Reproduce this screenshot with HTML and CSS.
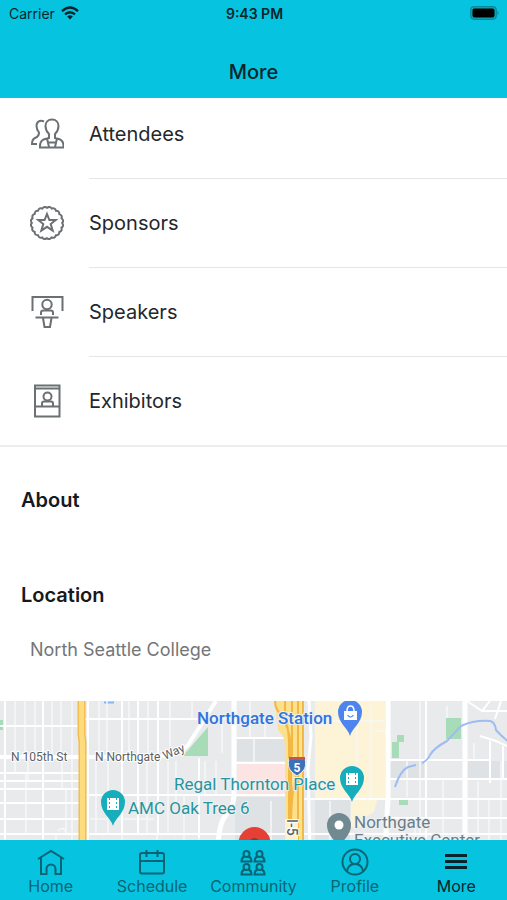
FILE: index.html
```html
<!DOCTYPE html>
<html lang="en">
<head>
<meta charset="utf-8">
<meta name="viewport" content="width=device-width, initial-scale=1">
<title>More</title>
<link rel="stylesheet" href="styles.css">
</head>
<body>
<header class="top">
  <div class="status">
    <span class="carrier">Carrier
      <svg width="18" height="14" viewBox="0 0 18 14" aria-hidden="true"><g fill="none" stroke="#04222a" stroke-width="2.4"><path d="M1 5.2Q9-2 17 5.2"/><path d="M4 8.4Q9 4 14 8.4"/></g><path d="M6.2 10.4Q9 8.2 11.8 10.4L9 13.6Z" fill="#04222a"/></svg>
    </span>
    <span class="time">9:43 PM</span>
    <span class="battery"><svg width="30" height="14" viewBox="0 0 30 14" aria-hidden="true"><rect x=".7" y=".7" width="25.6" height="12.6" rx="3.5" fill="#07a6ba" stroke="#098a9b" stroke-width="1.2"/><rect x="2.5" y="2.5" width="22" height="9" rx="2" fill="#000"/><path d="M27.5 4.6q2.4 2.4 0 4.800z" fill="#098a9b"/></svg></span>
  </div>
  <h1 class="title">More</h1>
</header>

<main class="content">
  <ul class="menu">
    <li class="item"><a class="link" href="#attendees">
      <svg class="icon" viewBox="0 0 34 34" aria-hidden="true"><path d="M14 4.500C10 2.500 6.500 4.500 6.500 9c0 3 1 4.500 2.500 6.500 0 3-1 4.500-4 5.500-2.500 1-3 2.500-3 6h5"/><path d="M22 2.500c-4 0-6.500 2.800-6.500 6.500 0 3.500 1.500 6 3.500 8v4c-3 1-9 .5-9 8v1.500h23.500V29c0-7.500-5.500-7-8.500-8v-4c2-2 3.500-4.500 3.500-8 0-3.700-2.500-6.500-6.500-6.500z"/><path d="M17 21.500l2 8.500M27 21.500l-2 8.500M18.500 25.500h7"/></svg>
      <span class="label">Attendees</span></a></li>
    <li class="item"><a class="link" href="#sponsors">
      <svg class="icon" viewBox="0 0 34 34" aria-hidden="true"><path d="M17.00 1.80 Q20.02 -0.21 21.70 2.54 Q25.19 1.57 25.93 4.70 Q29.55 4.86 29.30 8.07 Q32.68 9.36 31.46 12.30 Q34.30 14.55 32.20 17.00 Q34.21 20.02 31.46 21.70 Q32.43 25.19 29.30 25.93 Q29.14 29.55 25.93 29.30 Q24.64 32.68 21.70 31.46 Q19.45 34.30 17.00 32.20 Q13.98 34.21 12.30 31.46 Q8.81 32.43 8.07 29.30 Q4.45 29.14 4.70 25.93 Q1.32 24.64 2.54 21.70 Q-.30 19.45 1.80 17.00 Q-.21 13.98 2.54 12.30 Q1.57 8.81 4.70 8.07 Q4.86 4.45 8.07 4.70 Q9.36 1.32 12.30 2.54 Q14.55 -.30 17.00 1.80Z"/><path d="M17 8l2.400 6h6.300l-5 4 2 6.700L17 20.800l-5.700 3.900 2-6.700-5-4h6.300z"/></svg>
      <span class="label">Sponsors</span></a></li>
    <li class="item"><a class="link" href="#speakers">
      <svg class="icon" viewBox="0 0 34 34" aria-hidden="true"><path d="M2.500 16V2h30v14M5.500 22.500h23M13 23l1.500 9h5.500L21.500 23"/><circle cx="17" cy="9.500" r="4.700"/><path d="M11 20v-2.500q0-2 2.500-2h7q2.500 0 2.500 2V20"/></svg>
      <span class="label">Speakers</span></a></li>
    <li class="item"><a class="link" href="#exhibitors">
      <svg class="icon" viewBox="0 0 34 34" aria-hidden="true"><path d="M5 1.500h24.500v31H5zM5 4.500h24.500M5 22.500h24.500"/><circle cx="17.500" cy="12.500" r="4"/><path d="M12 22v-2.500q0-2 2-2h7q2 0 2 2V22"/></svg>
      <span class="label">Exhibitors</span></a></li>
  </ul>

  <section class="section"><h2 class="heading">About</h2></section>
  <section class="section"><h2 class="heading">Location</h2><p class="place">North Seattle College</p></section>

  <div class="map">
    <svg class="map-art" viewBox="0 0 507 150" preserveAspectRatio="xMidYMin slice" role="img" aria-label="Map around Northgate">
      <rect width="507" height="150" fill="#e8eaec"/>
      <path fill="#dfe2e5" d="M237 38h48v22h-48zM235 96h50v50h-50zM315 98h35v52h-35zM467 60h40v18h-40zM390 60h34v17h-34z"/>
      <path fill="#fdf3d6" d="M315 0h70v97h-70zM351 99h26l-3 12-8 5v10h-15z"/>
      <path fill="#fbe4e2" d="M238 63h48v30h-48z"/>
      <path fill="#a8dbb8" d="M208 26v29h-25l12-14zM446 17h15v21h-15zM392 41h5v-7h7v7h-5v16h-7zM399 98h9v6h-9zM0 19h3v10H0z"/>
      <path d="M104 1.500h10" stroke="#8ab4f8" stroke-width="2"/>
      <g fill="none" stroke="#f6f7f8" stroke-width="1.500">
        <path d="M15 0v55M25 0v55M35 0v55M52 0v55M61 0v55M72 0v55M99 0v55M107 0v55M129 0v55M148 0v52M170 0v45M96 60v72M108 60v72M147 60v72M168 60v72M15 60v12M28 60v20M62 60v28M56 134v10M26 72v60M66 88v44M72 0v140M176 60v40M184 94v46M205 60v34M216 60v34M199 96v44M254 38v25M271 100v40M330 100v40M357 5v91M371 5v91M407 60v36M447 5v12M474 42v17M443 78v60M478 80v60M489 98v42M501 60v80M415 120v20M250 0v38M265 15v22M90 118h64M210 18h24M330 20h55M374 30h12"/>
        <path d="M420 0v140M122 133v8M157 133v8M58 130q6-6 8 2M192 0v18M222 22v30"/>
      </g>
      <g fill="none" stroke="#fff" stroke-width="2">
        <path d="M5 0v140M43 0v140M88 0v140M122 0v132M138 0v132M158 0v132M199 57v80M0 25h79M84 18h126M0 72h79M0 80h79M0 88h79M0 102h79M0 118h79M0 133h507M84 94h203M235 37h50M235 62h50M388 59h102M388 78h119M303 98h204M388 117h119M426 0v140M490 40v42M503 45v33M467 0l15 10 25 0M482 10l8-10M495 18l6-18M480 35l16 5 11 5"/>
      </g>
      <g fill="none" stroke="#fff">
        <path d="M0 56h150Q177 56 188 44L216 0" stroke-width="4"/>
        <path d="M234 0v94Q234 105 226 114T218 150M388 0v97L385 150M465 0v150" stroke-width="5"/>
        <path d="M309 0l2 35-3 32 2 83" stroke-width="3"/>
      </g>
      <path d="M395 86q5-16 13-20l8-2M422 62q6-3 8-8 4-7 17-14l14-15q13-6 29-5 5 1 6 9 5 6 13 12" fill="none" stroke="#9dbcf3" stroke-width="2"/>
      <path d="M81.500 0v33l1 8v109" fill="none" stroke="#f5bd4f" stroke-width="8"/>
      <path d="M81.500 0v33l1 8v109" fill="none" stroke="#fedc7d" stroke-width="5"/>
      <path fill="#fce08c" d="M275 0h28v150h-18V45q0-10-7-16z"/>
      <path d="M275 0q0 10 8 15 6 8 6 30v105M285 0v22q6 10 6 30v90M292 0v55M298 0v150M303 0v150M296 75q-6 20-5 75" fill="none" stroke="#f2b843" stroke-width="2"/>
      <path d="M289 57h16q2 9-2 13-3 3-6 5-3-2-6-5-4-4-2-13z" fill="#3d70b7" stroke="#eef1f5"/>
      <path d="M289 56h16v3h-16z" fill="#cf5148"/>
      <text x="297" y="71" class="shield">5</text>
      <path fill="#fff0c9" d="M285 118h13v24h-13z"/>
      <text class="road route" transform="translate(287 118) rotate(90)">I-5</text>
      <text x="11" y="60" class="road">N 105th St</text>
      <text x="95" y="60" class="road">N Northgate</text>
      <text class="road" transform="translate(165 59) rotate(-24)">Way</text>
      <text x="197" y="23" class="poi station">Northgate Station</text>
      <text x="174" y="89" class="poi teal">Regal Thornton Place</text>
      <text x="128" y="113" class="poi teal">AMC Oak Tree 6</text>
      <text x="354" y="127" class="poi gray">Northgate</text>
      <text x="354" y="145" class="poi gray">Executive Center</text>
      <defs><path id="pin" d="M0 17C-2 9-12 4-12-7a12 12 0 0 1 24 0C12 4 2 9 0 17z"/></defs>
      <use href="#pin" x="350" y="18" fill="#4e84ee"/>
      <path d="M344 10h13v9h-13z" fill="#fff"/><path d="M347 10q0-5 3.500-5t3.500 5" fill="none" stroke="#fff" stroke-width="1.500"/><path d="M347.500 14q3 4 6 0" fill="none" stroke="#4e84ee" stroke-width="1.200"/>
      <use href="#pin" x="352" y="84" fill="#16aebd"/><use href="#pin" x="113" y="108" fill="#16aebd"/>
      <path d="M346 72h12v12h-12zM107 97h12v12h-12z" fill="#fff"/>
      <path d="M348.500 72v12M355.500 72v12M109.500 97v12M116.500 97v12" fill="none" stroke="#16aebd" stroke-dasharray="2 2"/>
      <use href="#pin" x="339" y="131" fill="#718990"/><circle cx="339" cy="124" r="4.500" fill="#fff"/>
      <circle cx="254.500" cy="142" r="16" fill="#e63f35"/><circle cx="254.500" cy="142" r="5" fill="#b32b27"/>
    </svg>
  </div>
</main>

<nav class="tabs" aria-label="Main">
  <a class="tab" href="#home"><svg class="tab-icon" viewBox="0 0 28 28" aria-hidden="true"><path d="M1 11L14 3l13 8M4 9.500V26h5.500v-5a4.500 4.500 0 0 1 9 0v5H24V9.500"/></svg>Home</a>
  <a class="tab" href="#schedule"><svg class="tab-icon" viewBox="0 0 28 28" aria-hidden="true"><rect x="2" y="5" width="24" height="20.500" rx="2"/><path d="M2 13h24M8.500 2v7M19.500 2v7"/></svg>Schedule</a>
  <a class="tab" href="#community"><svg class="tab-icon" viewBox="0 0 28 28" aria-hidden="true"><g id="pair"><circle cx="7.500" cy="6" r="3"/><path d="M5.500 8.500Q2.500 9.500 2.500 13.500h10q0-4-3-5"/><circle cx="20.500" cy="6" r="3"/><path d="M18.500 8.500Q15.500 9.500 15.500 13.500h10q0-4-3-5"/></g><use href="#pair" y="13"/></svg>Community</a>
  <a class="tab" href="#profile"><svg class="tab-icon" viewBox="0 0 28 28" aria-hidden="true"><circle cx="14" cy="14" r="12.500"/><circle cx="14" cy="11" r="5"/><path d="M6 23.500q1-7.500 8-7.500t8 7.500"/></svg>Profile</a>
  <a class="tab active" href="#more" aria-current="page"><svg class="tab-icon bars" viewBox="0 0 28 28" aria-hidden="true"><path d="M3 7.500h22M3 13.500h22M3 19.500h22"/></svg>More</a>
</nav>
</body>
</html>
```

FILE: styles.css
```css
* { box-sizing: border-box; }
body {
  margin: 0;
  height: 100vh;
  display: flex;
  flex-direction: column;
  font-family: Inter, "Liberation Sans", sans-serif;
  color: #24272b;
  background: #fff;
}
a { color: inherit; text-decoration: none; }
.top {
  flex: none;
  background: #06c4e0;
  color: #07262d;
  padding-bottom: 12px;
}
.status {
  display: grid;
  grid-template-columns: 1fr auto 1fr;
  align-items: center;
  height: 26px;
  padding: 0 7px 0 9px;
  font-size: 14px;
}
.carrier { display: flex; align-items: center; gap: 6px; }
.time { font-weight: 600; }
.battery { display: flex; justify-content: flex-end; }
.title {
  margin: 0;
  padding-top: 32px;
  font-size: 20px;
  line-height: 28px;
  font-weight: 500;
  text-align: center;
}
.content {
  flex: 1;
  min-height: 0;
  display: flex;
  flex-direction: column;
}
.menu {
  list-style: none;
  margin: 0 0 26px;
  padding: 0;
  border-bottom: 2px solid #ececee;
}
.link {
  display: flex;
  align-items: center;
  height: 89px;
  padding-left: 30px;
  gap: 25px;
}
.item:first-child .link { height: 80px; padding-bottom: 8px; }
.icon {
  width: 34px;
  height: 34px;
  fill: none;
  stroke: #6b7073;
  stroke-width: 2;
}
.label {
  flex: 1;
  align-self: stretch;
  display: flex;
  align-items: center;
  font-size: 20px;
}
.item:not(:last-child) .label { box-shadow: 0 1px #e6e6e8; }
.item:first-child .label { margin-bottom: -8px; padding-bottom: 8px; }
.section { padding: 11px 21px 12px; min-height: 95px; }
.heading {
  margin: 0;
  font-size: 20px;
  line-height: 32px;
  font-weight: 600;
  color: #17191c;
}
.place {
  margin: 27px 9px;
  font-size: 18px;
  line-height: 24px;
  color: #747678;
}
.map { flex: 1; min-height: 0; overflow: hidden; }
.map-art { display: block; width: 100%; min-height: 100%; font-family: Roboto, sans-serif; }
.road { font-size: 12px; fill: #5c6064; stroke: #fff; stroke-width: 2px; paint-order: stroke; }
.route { font-weight: 500; font-size: 14px; }
.poi { font-size: 17px; stroke: #eef1f3; stroke-width: 2px; paint-order: stroke; }
.station { fill: #2f74e0; font-weight: 500; }
.teal { fill: #27949d; }
.gray { fill: #6b7d85; }
.shield { font-size: 12px; font-weight: 700; fill: #fff; text-anchor: middle; }
.tabs {
  flex: none;
  display: grid;
  grid-template-columns: repeat(5, 1fr);
  height: 60px;
  padding-top: 8px;
  background: #06c4e0;
  color: #096474;
}
.tab {
  display: flex;
  flex-direction: column;
  align-items: center;
  font-size: 16px;
  line-height: 20px;
}
.tab-icon {
  width: 28px;
  height: 28px;
  fill: none;
  stroke: currentColor;
  stroke-width: 2;
}
.bars { stroke-width: 3; }
.active { color: #05242b; }
```
